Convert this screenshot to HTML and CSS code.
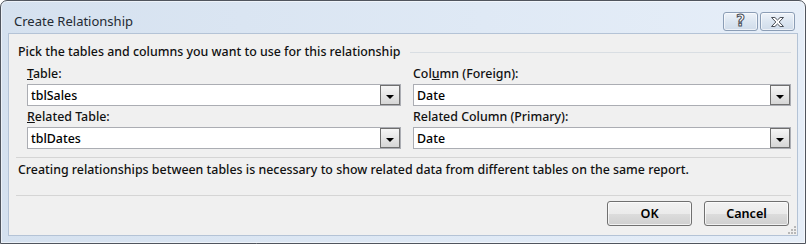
FILE: index.html
```html
<!DOCTYPE html>
<html>
<head>
  <meta charset="utf-8">
  <title>Create Relationship</title>
  <link rel="stylesheet" href="styles.css">
</head>
<body>
<div class="dialog">
  <div class="titlebar">
    <span class="title">Create Relationship</span>
    <div class="caption-btns">
      <span class="cap-btn help">?</span>
      <span class="cap-btn close">
        <svg width="15" height="12" viewBox="0 0 15 12">
          <path d="M1.5 1.5h3.4l2.6 2.5 2.6-2.5h3.4l-4.3 4.5 4.3 4.5h-3.4l-2.6-2.5-2.6 2.5h-3.4l4.3-4.5z" fill="#fff" stroke="#4a4f57" stroke-width="1" stroke-linejoin="round"/>
        </svg>
      </span>
    </div>
  </div>
  <div class="client">
    <div class="group-head">
      <span>Pick the tables and columns you want to use for this relationship</span>
      <span class="rule"></span>
    </div>
    <div class="fields">
      <div class="field">
        <label><u>T</u>able:</label>
        <div class="combo"><span class="value">tblSales</span><span class="drop"></span></div>
      </div>
      <div class="field">
        <label>Col<u>u</u>mn (Foreign):</label>
        <div class="combo"><span class="value">Date</span><span class="drop"></span></div>
      </div>
      <div class="field">
        <label><u>R</u>elated Table:</label>
        <div class="combo"><span class="value">tblDates</span><span class="drop"></span></div>
      </div>
      <div class="field">
        <label>Related Column (Primary):</label>
        <div class="combo"><span class="value">Date</span><span class="drop"></span></div>
      </div>
    </div>
    <div class="sep"></div>
    <p class="note">Creating relationships between tables is necessary to show related data from different tables on the same report.</p>
    <div class="sep sep-low"></div>
    <div class="actions">
      <button class="btn">OK</button>
      <button class="btn">Cancel</button>
    </div>
    <svg class="grip" width="8" height="8" viewBox="0 0 8 8">
      <rect x="6" y="0" width="2" height="2" fill="#b8b8b8"/>
      <rect x="3" y="3" width="2" height="2" fill="#b8b8b8"/>
      <rect x="6" y="3" width="2" height="2" fill="#b8b8b8"/>
      <rect x="0" y="6" width="2" height="2" fill="#b8b8b8"/>
      <rect x="3" y="6" width="2" height="2" fill="#b8b8b8"/>
      <rect x="6" y="6" width="2" height="2" fill="#b8b8b8"/>
    </svg>
  </div>
</div>
</body>
</html>
```

FILE: styles.css
```css
* {
  box-sizing: border-box;
}
body {
  margin: 0;
  font-family: "Noto Sans", "Open Sans", sans-serif;
  font-size: 12.4px;
  font-weight: 500;
  color: #111;
}
.dialog {
  width: 806px;
  height: 244px;
  display: flex;
  flex-direction: column;
  padding: 0 7px 7px 7px;
  border: 1px solid #50555e;
  border-radius: 7px 7px 0 0;
  background: linear-gradient(to right, #d5e1ef, #dfe9f5 60%, #e6eef8);
  box-shadow: inset 0 0 0 1px rgba(255, 255, 255, .55);
}
.titlebar {
  height: 32px;
  display: flex;
  justify-content: space-between;
  align-items: flex-start;
  padding: 0 3px 0 6px;
}
.title {
  margin-top: 10px;
  font-size: 13px;
  font-weight: 400;
  line-height: 20px;
  color: #232a33;
}
.caption-btns {
  display: flex;
  gap: 2px;
  margin-top: 11px;
}
.cap-btn {
  width: 35px;
  height: 19px;
  display: flex;
  align-items: center;
  justify-content: center;
  border: 1px solid #8b9db5;
  border-radius: 3px;
  background: linear-gradient(#eef3f9, #dce6f1 50%, #d0dcea);
  box-shadow: inset 0 0 0 1px rgba(255, 255, 255, .6);
}
.help {
  font-family: "DejaVu Sans", sans-serif;
  font-weight: bold;
  font-size: 15px;
  line-height: 1;
  color: #fff;
  -webkit-text-stroke: 1px #4a4f57;
}
.client {
  position: relative;
  flex: 1;
  display: flex;
  flex-direction: column;
  border: 1px solid #b4c3d6;
  background: #f0f0f0;
  padding: 9px 0 0 0;
}
.group-head {
  display: flex;
  align-items: center;
  gap: 10px;
  padding: 0 6px 0 9px;
  line-height: 18px;
}
.rule {
  flex: 1;
  height: 1px;
  background: #d9dee3;
  margin-top: 1px;
}
.fields {
  display: grid;
  grid-template-columns: 374px 378px;
  column-gap: 12px;
  row-gap: 2px;
  padding-left: 18px;
  margin-top: 4px;
}
.field label {
  display: block;
  line-height: 18px;
  margin-bottom: 1px;
}
.combo {
  height: 22px;
  display: flex;
  align-items: center;
  border: 1px solid #abadb3;
  background: #fff;
  color: #000;
}
.value {
  flex: 1;
  padding-left: 3px;
}
.drop {
  position: relative;
  width: 20px;
  height: 20px;
  border: 1px solid #6f6f6f;
  background: linear-gradient(#f6f6f6, #e6e6e6 50%, #d6d6d6);
}
.drop::after {
  content: "";
  position: absolute;
  left: 5px;
  top: 9px;
  border-left: 4px solid transparent;
  border-right: 4px solid transparent;
  border-top: 4px solid #000;
}
.sep {
  height: 1px;
  margin: 8px 6px 0 7px;
  background: #d5d5d5;
}
.sep-low {
  margin-top: 16px;
}
.note {
  margin: 3px 0 0 0;
  padding-left: 9px;
  line-height: 18px;
}
.actions {
  display: flex;
  justify-content: flex-end;
  gap: 12px;
  padding-right: 8px;
  margin-top: 5px;
}
.btn {
  width: 85px;
  height: 25px;
  font-family: inherit;
  font-size: 12.6px;
  font-weight: 600;
  color: #000;
  border: 1px solid #707070;
  border-radius: 3px;
  background: linear-gradient(#f2f2f2, #ebebeb 50%, #dddddd 50%, #cfcfcf);
  box-shadow: inset 0 0 0 1px rgba(255, 255, 255, .7);
  padding: 0;
}
.grip {
  position: absolute;
  right: 1px;
  bottom: 1px;
}
```
